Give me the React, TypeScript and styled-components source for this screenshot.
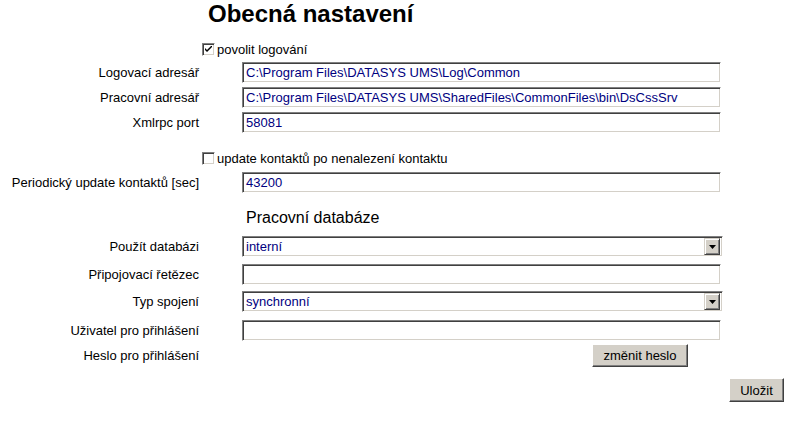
import React from "react";
import styled, { createGlobalStyle } from "styled-components";

const GlobalStyle = createGlobalStyle`
  html, body {
    margin: 0;
    padding: 0;
    background: #fff;
  }
  body {
    font-family: "Liberation Sans", Arial, sans-serif;
    font-size: 13px;
    color: #000;
  }
`;

const Page = styled.div`
  width: 791px;
  height: 431px;
  display: flex;
  flex-direction: column;
`;

const Title = styled.h1`
  margin: 0;
  padding-left: 208px;
  font-size: 24px;
  line-height: 28px;
  font-weight: bold;
  height: 28px;
`;

const Row = styled.div<{ $mt: number; $h: number }>`
  display: grid;
  grid-template-columns: 199px 481px;
  column-gap: 43px;
  align-items: center;
  margin-top: ${(p) => p.$mt}px;
  height: ${(p) => p.$h}px;
`;

const Label = styled.div`
  text-align: right;
  white-space: nowrap;
  line-height: 15px;
`;

const CheckRow = styled.label<{ $mt: number }>`
  display: flex;
  align-items: center;
  gap: 2px;
  padding-left: 202px;
  height: 14px;
  margin-top: ${(p) => p.$mt}px;
  white-space: nowrap;
`;

const CheckBox = styled.span`
  width: 13px;
  height: 13px;
  box-sizing: border-box;
  border: 1px solid;
  border-color: #808080 #fff #fff #808080;
  box-shadow: inset 1px 1px #404040, inset -1px -1px #d4d0c8;
  background: #fff;
  display: flex;
  align-items: center;
  justify-content: center;
`;

const Field = styled.div<{ $w: number }>`
  width: ${(p) => p.$w}px;
  height: 21px;
  box-sizing: border-box;
  border: 1px solid;
  border-color: #808080 #fff #fff #808080;
  box-shadow: inset 1px 1px #404040, inset -1px -1px #d4d0c8;
  background: #fff;
  color: #000080;
  padding: 0 0 0 3px;
  display: flex;
  align-items: center;
  white-space: nowrap;
  overflow: hidden;
`;

const FieldText = styled.span`
  flex: 1;
`;

const DropButton = styled.span`
  width: 16px;
  height: 17px;
  box-sizing: border-box;
  margin-right: 2px;
  background: #d4d0c8;
  border: 1px solid;
  border-color: #d4d0c8 #404040 #404040 #d4d0c8;
  box-shadow: inset 1px 1px #fff, inset -1px -1px #808080;
  display: flex;
  align-items: center;
  justify-content: center;
`;

const Section = styled.div`
  margin-top: 15px;
  height: 20px;
  line-height: 20px;
  padding-left: 246px;
  font-size: 16px;
`;

const Button = styled.button`
  font-family: "Liberation Sans", Arial, sans-serif;
  font-size: 13px;
  color: #000;
  background: #d4d0c8;
  border: 1px solid;
  border-color: #fff #404040 #404040 #fff;
  box-shadow: inset -1px -1px #808080;
  padding: 0;
  box-sizing: border-box;
`;

const PasswordButton = styled(Button)`
  width: 96px;
  height: 23px;
  margin-left: 350px;
`;

const Footer = styled.div`
  display: flex;
  justify-content: flex-end;
  padding-right: 7px;
  margin-top: 11px;
`;

const SaveButton = styled(Button)`
  width: 55px;
  height: 24px;
`;

const Check = ({ checked }: { checked: boolean }) => (
  <CheckBox>
    {checked && (
      <svg width="7" height="7" viewBox="0 0 7 7">
        <path d="M0 2 L0 4 L2 6 L7 1 L7 -1 L2 4 Z" fill="#000" />
      </svg>
    )}
  </CheckBox>
);

const Arrow = () => (
  <svg width="7" height="4" viewBox="0 0 7 4">
    <path d="M0 0 H7 L3.5 4 Z" fill="#000" />
  </svg>
);

const TextRow = ({ label, value, mt }: { label: string; value?: string; mt: number }) => (
  <Row $mt={mt} $h={21}>
    <Label>{label}</Label>
    <Field $w={479}>
      <FieldText>{value}</FieldText>
    </Field>
  </Row>
);

const SelectRow = ({ label, value, mt }: { label: string; value: string; mt: number }) => (
  <Row $mt={mt} $h={21}>
    <Label>{label}</Label>
    <Field $w={481}>
      <FieldText>{value}</FieldText>
      <DropButton>
        <Arrow />
      </DropButton>
    </Field>
  </Row>
);

const App = () => {
  return (
    <Page>
      <GlobalStyle />
      <Title>Obecná nastavení</Title>
      <CheckRow $mt={14}>
        <Check checked={true} />
        povolit logování
      </CheckRow>
      <TextRow mt={6} label="Logovací adresář" value="C:\Program Files\DATASYS UMS\Log\Common" />
      <TextRow
        mt={4}
        label="Pracovní adresář"
        value="C:\Program Files\DATASYS UMS\SharedFiles\CommonFiles\bin\DsCssSrv"
      />
      <TextRow mt={4} label="Xmlrpc port" value="58081" />
      <CheckRow $mt={18}>
        <Check checked={false} />
        update kontaktů po nenalezení kontaktu
      </CheckRow>
      <TextRow mt={7} label="Periodický update kontaktů [sec]" value="43200" />
      <Section>Pracovní databáze</Section>
      <SelectRow mt={8} label="Použít databázi" value="interní" />
      <TextRow mt={7} label="Připojovací řetězec" />
      <SelectRow mt={6} label="Typ spojení" value="synchronní" />
      <TextRow mt={8} label="Uživatel pro přihlášení" />
      <Row $mt={3} $h={23}>
        <Label>Heslo pro přihlášení</Label>
        <div>
          <PasswordButton>změnit heslo</PasswordButton>
        </div>
      </Row>
      <Footer>
        <SaveButton>Uložit</SaveButton>
      </Footer>
    </Page>
  );
};

export default App;
